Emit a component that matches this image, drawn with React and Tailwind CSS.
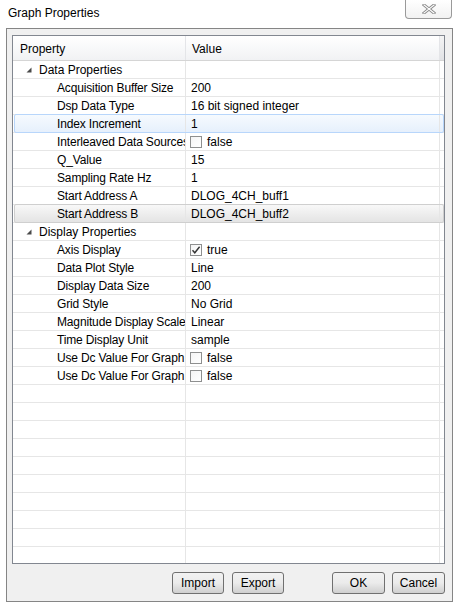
import React from 'react';

const GROUPS = [
  {
    name: 'Data Properties',
    items: [
      { label: 'Acquisition Buffer Size', value: '200' },
      { label: 'Dsp Data Type', value: '16 bit signed integer' },
      { label: 'Index Increment', value: '1', state: 'hover' },
      { label: 'Interleaved Data Sources', value: 'false', check: false },
      { label: 'Q_Value', value: '15' },
      { label: 'Sampling Rate Hz', value: '1' },
      { label: 'Start Address A', value: 'DLOG_4CH_buff1' },
      { label: 'Start Address B', value: 'DLOG_4CH_buff2', state: 'selected' },
    ],
  },
  {
    name: 'Display Properties',
    items: [
      { label: 'Axis Display', value: 'true', check: true },
      { label: 'Data Plot Style', value: 'Line' },
      { label: 'Display Data Size', value: '200' },
      { label: 'Grid Style', value: 'No Grid' },
      { label: 'Magnitude Display Scale', value: 'Linear' },
      { label: 'Time Display Unit', value: 'sample' },
      { label: 'Use Dc Value For Graph A', value: 'false', check: false },
      { label: 'Use Dc Value For Graph B', value: 'false', check: false },
    ],
  },
];

const TOTAL_ROWS = 28;

function Checkbox({ checked }) {
  return (
    <span className="w-[12px] h-[12px] border border-[#8e8f8f] bg-gradient-to-br from-[#f4f4f4] to-white flex items-center justify-center shrink-0">
      {checked && (
        <svg width="10" height="10" viewBox="0 0 10 10">
          <path d="M1.5 5.2 L3.8 7.8 L8.6 1.8" fill="none" stroke="#333" strokeWidth="1.4" />
        </svg>
      )}
    </span>
  );
}

function Expander() {
  return (
    <svg width="6" height="6" viewBox="0 0 6 6" className="shrink-0">
      <path d="M5.5 0.5 L5.5 5.5 L0.5 5.5 Z" fill="#4a4a4a" />
    </svg>
  );
}

function Row({ children, state }) {
  return (
    <div className="relative flex h-[18px] shrink-0 border-b border-[#e6e6e6]">
      {state === 'hover' && (
        <div className="absolute -top-px bottom-[-1px] left-px right-0 rounded-[2px] border border-[#b8d6fb] bg-gradient-to-b from-[#f6fafe] to-[#e6f0fc]" />
      )}
      {state === 'selected' && (
        <div className="absolute -top-px bottom-[-1px] left-px right-0 rounded-[2px] border border-[#cfcfcf] bg-gradient-to-b from-[#f8f8f8] to-[#e4e4e4]" />
      )}
      {children}
    </div>
  );
}

function LabelCell({ children, className = '' }) {
  return (
    <div className={`relative w-[173px] shrink-0 border-r border-[#e6e6e6] flex items-center overflow-hidden whitespace-nowrap pt-px ${className}`}>
      {children}
    </div>
  );
}

function ValueCell({ children }) {
  return (
    <div className="relative w-[254px] shrink-0 border-r border-[#e6e6e6] flex items-center overflow-hidden whitespace-nowrap pt-px">
      {children}
    </div>
  );
}

function Button({ children, className = '' }) {
  return (
    <button className={`h-[22px] rounded-[3px] border border-[#707070] bg-gradient-to-b from-[#f2f2f2] via-[#ebebeb] to-[#cfcfcf] text-[12px] text-black leading-none ${className}`}>
      {children}
    </button>
  );
}

export default function App() {
  const rows = [];
  GROUPS.forEach((g) => {
    rows.push({ type: 'group', name: g.name });
    g.items.forEach((it) => rows.push({ type: 'item', ...it }));
  });
  while (rows.length < TOTAL_ROWS) rows.push({ type: 'empty' });

  return (
    <div className="w-[457px] h-[607px] bg-white relative overflow-hidden text-black" style={{ fontFamily: '"Liberation Sans", Arial, sans-serif' }}>
      <div className="h-[28px] flex items-start">
        <div className="pl-[8px] pt-[6px] text-[12px] leading-[14px]">Graph Properties</div>
        <div className="ml-auto mr-[5px] w-[47px] h-[19px] border border-t-0 border-[#9a9a9a] rounded-b-[4px] bg-gradient-to-b from-white to-[#f2f2f2] flex items-center justify-center">
          <svg width="14" height="10" viewBox="0 0 14 10">
            <path d="M2 1 L12 9 M12 1 L2 9" stroke="#8a8a8a" strokeWidth="3" strokeLinecap="square" />
            <path d="M2 1 L12 9 M12 1 L2 9" stroke="#ffffff" strokeWidth="1.2" strokeLinecap="square" />
          </svg>
        </div>
      </div>

      <div className="ml-[6px] w-[447px] h-[574px] border border-[#858585] bg-[#f0f0f0] pl-[5px] pr-[6px] pt-[6px] flex flex-col">
        <div className="border border-[#828790] bg-white w-[433px] h-[529px] overflow-hidden flex flex-col">
          <div className="flex h-[25px] shrink-0 border-b border-[#d5d5d5] bg-gradient-to-b from-white to-[#f1f2f4]">
            <div className="w-[173px] shrink-0 border-r border-[#e4e5e8] flex items-center pl-[7px] text-[12px] pt-[2px]">Property</div>
            <div className="w-[254px] shrink-0 border-r border-[#e4e5e8] flex items-center pl-[6px] text-[12px] pt-[2px]">Value</div>
            <div className="w-[4px] shrink-0 bg-gradient-to-b from-[#f4f4f4] to-[#e2e3e6]" />
          </div>
          {rows.map((r, i) => {
            if (r.type === 'group') {
              return (
                <Row key={i}>
                  <LabelCell className="pl-[13px] gap-[7px]">
                    <Expander />
                    <span className="text-[12px]">{r.name}</span>
                  </LabelCell>
                  <ValueCell />
                </Row>
              );
            }
            if (r.type === 'item') {
              return (
                <Row key={i} state={r.state}>
                  <LabelCell className="pl-[44px]">
                    <span className="text-[12px] tracking-[-0.15px]">{r.label}</span>
                  </LabelCell>
                  <ValueCell>
                    {r.check !== undefined ? (
                      <div className="flex items-center pl-[4px] gap-[5px]">
                        <Checkbox checked={r.check} />
                        <span className="text-[12px]">{r.value}</span>
                      </div>
                    ) : (
                      <span className="text-[12px] pl-[5px]">{r.value}</span>
                    )}
                  </ValueCell>
                </Row>
              );
            }
            return (
              <Row key={i}>
                <LabelCell />
                <ValueCell />
              </Row>
            );
          })}
        </div>

        <div className="flex mt-[8px]">
          <Button className="ml-[160px] w-[52px]">Import</Button>
          <Button className="ml-[8px] w-[52px]">Export</Button>
          <Button className="ml-[48px] w-[53px]">OK</Button>
          <Button className="ml-[7px] w-[53px]">Cancel</Button>
        </div>
      </div>
    </div>
  );
}
